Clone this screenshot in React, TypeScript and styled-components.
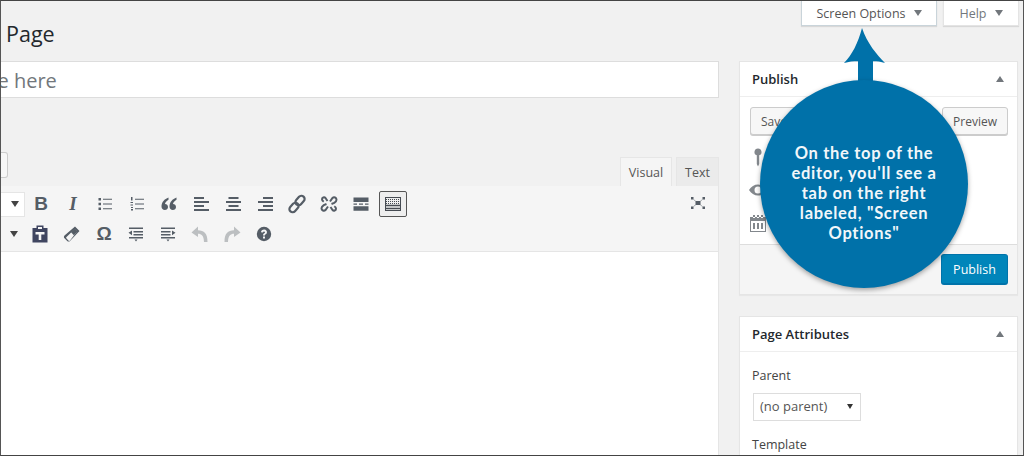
import React from 'react';
import styled, { createGlobalStyle } from 'styled-components';

const GlobalStyle = createGlobalStyle`
    html, body {
        margin: 0;
        padding: 0;
        background: #f1f1f1;
    }
    * {
        box-sizing: border-box;
    }
`;

const Icon: React.FC<{ children: React.ReactNode; color?: string }> = ({ children, color = '#555d66' }) => (
    <svg width="20" height="20" viewBox="0 0 20 20" fill={color}>
        {children}
    </svg>
);

const App: React.FC = () => {
    return (
        <Frame>
            <GlobalStyle />
            <TopBar>
                <ScreenTab active>
                    Screen Options <TabArrow />
                </ScreenTab>
                <ScreenTab>
                    Help <TabArrow />
                </ScreenTab>
            </TopBar>
            <Columns>
                <EditorColumn>
                    <PageTitle>Page</PageTitle>
                    <TitleInput>
                        <TitleHint>Enter title here</TitleHint>
                    </TitleInput>
                    <MediaRow>
                        <MediaStub />
                        <EditorTabs>
                            <EditorTab active>Visual</EditorTab>
                            <EditorTab>Text</EditorTab>
                        </EditorTabs>
                    </MediaRow>
                    <Toolbar>
                        <ToolRow>
                            <FormatStub>
                                <SmallArrow />
                            </FormatStub>
                            <ToolGlyph bold>B</ToolGlyph>
                            <ToolGlyph italic>I</ToolGlyph>
                            <Tool>
                                <Icon>
                                    <path d="M3.500 4h2.500v2.500H3.500zM3.500 8.800h2.500v2.500H3.500zM3.500 13.500h2.500V16H3.500zM8 4.800h9v1H8zM8 9.500h9v1H8zM8 14.200h9v1H8z" />
                                </Icon>
                            </Tool>
                            <Tool>
                                <Icon>
                                    <path d="M4 3h1.500v3.500H4zM3.500 8h2.500v1H3.500zM3.500 10.500h2.500v1H3.500zM4 13h2v1H4zM4 15h2v1.500H4zM8 4.800h9v1H8zM8 9.500h9v1H8zM8 14.200h9v1H8z" />
                                </Icon>
                            </Tool>
                            <Tool>
                                <Icon>
                                    <path d="M9.500 3.500C5.500 5 2.500 8 2.500 12.500c0 2.200 1.500 3.500 3.300 3.500 1.800 0 3.200-1.400 3.200-3.100 0-1.700-1.300-3-3-3 .3-1.500 1.500-3 3.500-4.200z" />
                                    <path d="M17.500 3.500C13.500 5 10.500 8 10.500 12.500c0 2.200 1.500 3.500 3.300 3.500 1.800 0 3.200-1.400 3.200-3.100 0-1.700-1.300-3-3-3 .3-1.500 1.500-3 3.500-4.200z" />
                                </Icon>
                            </Tool>
                            <Tool>
                                <Icon>
                                    <path d="M3 3h10v2H3zM3 7h15v2H3zM3 11h10v2H3zM3 15h15v2H3z" />
                                </Icon>
                            </Tool>
                            <Tool>
                                <Icon>
                                    <path d="M5.500 3h10v2h-10zM3 7h15v2H3zM5.500 11h10v2h-10zM3 15h15v2H3z" />
                                </Icon>
                            </Tool>
                            <Tool>
                                <Icon>
                                    <path d="M8 3h10v2H8zM3 7h15v2H3zM8 11h10v2H8zM3 15h15v2H3z" />
                                </Icon>
                            </Tool>
                            <Tool>
                                <Icon>
                                    <g fill="none" stroke="#555d66" strokeWidth="2.200">
                                        <rect x="9.800" y="1.200" width="6.400" height="10.600" rx="3.200" transform="rotate(42 13 6.500)" />
                                        <rect x="3.800" y="8.200" width="6.400" height="10.600" rx="3.200" transform="rotate(42 7 13.500)" />
                                    </g>
                                </Icon>
                            </Tool>
                            <Tool>
                                <Icon>
                                    <g fill="none" stroke="#555d66" strokeWidth="2">
                                        <path d="M11 7.500l2.500-3.500c1.500-1.500 4-.5 4 1.700 0 1.300-1 2.300-2.300 3.200L12.500 10" />
                                        <path d="M9 12.500L6.500 16c-1.500 1.500-4 .5-4-1.700 0-1.300 1-2.300 2.300-3.200L7.500 10" />
                                        <path d="M8.500 7L6.500 4c-1.200-1.300-3.500-.5-3.500 1.300 0 1 .7 1.800 1.700 2.500M11.500 13l2 3c1.200 1.300 3.500.5 3.500-1.300 0-1-.7-1.800-1.700-2.500" />
                                    </g>
                                </Icon>
                            </Tool>
                            <Tool>
                                <Icon>
                                    <path d="M2.500 3.500h15v4.500h-15zM2.500 9.500h3.500v1.200H2.500zM8 9.500h4v1.200H8zM14 9.500h3.500v1.200H14zM2.500 12.200h15v4.500h-15z" />
                                </Icon>
                            </Tool>
                            <SinkTool>
                                <Icon color="none">
                                    <g stroke="#464b52" fill="none">
                                        <rect x="2.500" y="3.500" width="15" height="13" strokeWidth="1" />
                                        <path d="M3 5.500h14M3 7.500h14M3 9.500h14" strokeWidth="1" strokeDasharray="1 1" />
                                        <path d="M3 11.500h14M3 14.500h14" strokeWidth="1.500" />
                                    </g>
                                </Icon>
                            </SinkTool>
                            <FullScreenTool>
                                <Icon>
                                    <path d="M3 4h2.500v2.500H3zM14.500 4H17v2.500h-2.500zM3 13.500h2.500V16H3zM14.500 13.500H17V16h-2.500zM7.500 8h5v4h-5z" />
                                    <path d="M5.500 6.500L8 8.500M14.500 6.500L12 8.500M5.500 13.500L8 11.500M14.500 13.500L12 11.500" stroke="#8f959a" strokeWidth="0.800" />
                                </Icon>
                            </FullScreenTool>
                        </ToolRow>
                        <ToolRow>
                            <FormatStub plain>
                                <SmallArrow />
                            </FormatStub>
                            <Tool>
                                <Icon color="#3f4560">
                                    <path d="M6.500 1.500h7v2.500h4v14.500h-15V4h4zM8 3v2h4V3zM5.500 8v2.500h3.200V16h2.600v-5.500h3.200V8z" fillRule="evenodd" />
                                </Icon>
                            </Tool>
                            <Tool>
                                <Icon>
                                    <path d="M13 2.500l4.500 4.500-9.500 10c-.8.800-2 .8-2.800 0L2.500 14.300c-.8-.8-.8-2 0-2.800zM12.800 5L5 12.600l-.7.700c-.3.300-.3.700 0 1l2.400 2.400c.3.300.7.300 1 0l.7-.7L15.200 7.300z" fillRule="evenodd" />
                                    <path d="M12.800 4.500l2.800 2.800-3.700 3.900-2.900-2.900z" />
                                </Icon>
                            </Tool>
                            <ToolGlyph omega>Ω</ToolGlyph>
                            <Tool>
                                <Icon>
                                    <path d="M3 3.500h14v1.500H3zM7.500 7h9.500v1.500H7.500zM7.500 10h9.500v1.500H7.500zM3 13h14v1.500H3zM8.500 15.500h3L10 17.500zM2.500 8.800L6 6.500v4.700z" />
                                </Icon>
                            </Tool>
                            <Tool>
                                <Icon>
                                    <path d="M3 3.500h14v1.500H3zM3 7h9.500v1.500H3zM3 10h9.500v1.500H3zM3 13h14v1.500H3zM8.500 15.500h3L10 17.500zM17.500 8.800L14 6.500v4.700z" />
                                </Icon>
                            </Tool>
                            <Tool>
                                <Icon color="#bcbfc1">
                                    <path d="M8 2.500L1.500 8.500 8 13V9.700c3.500 0 5.800 1.800 6 8.300h3.500c.2-8.500-3.500-11.800-9.500-11.800z" />
                                </Icon>
                            </Tool>
                            <Tool>
                                <Icon color="#bcbfc1">
                                    <path d="M12 2.500l6.500 6L12 13V9.700c-3.500 0-5.800 1.800-6 8.300H2.500C2.300 9.500 6 6.200 12 6.200z" />
                                </Icon>
                            </Tool>
                            <Tool>
                                <Icon>
                                    <path d="M10 2.800a7.200 7.200 0 1 0 0 14.400 7.200 7.200 0 0 0 0-14.400zm1 11.700H9v-2h2zm1.800-5.300c-.3.600-1 1-1.500 1.400-.3.300-.3.600-.3 1H9c0-1 .1-1.500.9-2.100.5-.4 1.100-.7 1.100-1.300 0-.5-.4-.8-1-.8s-1 .4-1.100 1.100l-1.900-.2C7.200 6.500 8.400 5.500 10.100 5.500c2.100 0 3.400 1.900 2.700 3.700z" fillRule="evenodd" />
                                </Icon>
                            </Tool>
                        </ToolRow>
                    </Toolbar>
                    <EditorBody />
                </EditorColumn>
                <SideColumn>
                    <MetaBox>
                        <BoxHeader>
                            <BoxTitle>Publish</BoxTitle>
                            <BoxArrow />
                        </BoxHeader>
                        <PublishActions>
                            <PlainButton>Save Draft</PlainButton>
                            <PlainButton>Preview</PlainButton>
                        </PublishActions>
                        <StatusList>
                            <StatusIcon>
                                <svg width="20" height="20" viewBox="0 0 20 20" fill="#82878c">
                                    <path d="M10 1.500a3.500 3.500 0 0 1 1.200 6.800V17L10 19.500 8.800 17V8.300A3.500 3.500 0 0 1 10 1.500z" />
                                </svg>
                            </StatusIcon>
                            <StatusIcon>
                                <svg width="20" height="20" viewBox="0 0 20 20" fill="#82878c">
                                    <path d="M1 10c2-3.500 5.500-5.500 9-5.500s7 2 9 5.500c-2 3.500-5.500 5.500-9 5.500S3 13.500 1 10zm9-3.500a3.500 3.500 0 1 0 0 7 3.500 3.500 0 0 0 0-7z" fillRule="evenodd" />
                                </svg>
                            </StatusIcon>
                            <StatusIcon>
                                <svg width="20" height="20" viewBox="0 0 20 20" fill="#82878c">
                                    <path d="M2 4h16v15H2zM3 8v10h14V8zM5 2h2v3H5zM9 2h2v3H9zM13 2h2v3h-2zM5 10h2v6H5zM9 10h2v6H9zM13 10h2v6h-2z" fillRule="evenodd" />
                                </svg>
                            </StatusIcon>
                        </StatusList>
                        <PublishFooter>
                            <PrimaryButton>Publish</PrimaryButton>
                        </PublishFooter>
                    </MetaBox>
                    <MetaBox>
                        <BoxHeader>
                            <BoxTitle>Page Attributes</BoxTitle>
                            <BoxArrow />
                        </BoxHeader>
                        <AttributesBody>
                            <FieldLabel>Parent</FieldLabel>
                            <SelectBox>
                                (no parent)
                                <SelectArrow />
                            </SelectBox>
                            <FieldLabel>Template</FieldLabel>
                        </AttributesBody>
                    </MetaBox>
                </SideColumn>
            </Columns>
            <Callout>
                <CalloutArrow width="42" height="60" viewBox="0 0 42 60">
                    <path d="M18 0C14 15 8 27 0 35c5-1.500 9-1.800 14-1.800V60h15V33.200c4 0 8 .3 12 1.800C33 27 23 15 18 0z" fill="#0071a9" />
                </CalloutArrow>
                <CalloutCircle>
                    On the top of the
                    <br />
                    editor, you'll see a
                    <br />
                    tab on the right
                    <br />
                    labeled, "Screen
                    <br />
                    Options"
                </CalloutCircle>
            </Callout>
        </Frame>
    );
};

export default App;

const Frame = styled.div`
    position: relative;
    width: 1024px;
    height: 456px;
    overflow: hidden;
    background: #f1f1f1;
    font-family: 'Open Sans', 'Noto Sans', sans-serif;
    color: #444;
    border-top: 1px solid #444;
    border-bottom: 1px solid #444;
    border-left: 1px solid #555;
    border-right: 1px solid #555;
`;

const TopBar = styled.div`
    display: flex;
    justify-content: flex-end;
    gap: 6px;
    height: 26px;
    padding-right: 4px;
`;

const ScreenTab = styled.div<{ active?: boolean }>`
    display: flex;
    align-items: center;
    justify-content: center;
    gap: 8px;
    width: ${(props) => (props.active ? '136px' : '76px')};
    height: 25px;
    background: #fff;
    font-size: 12.5px;
    color: ${(props) => (props.active ? '#555' : '#72777c')};
    border: 1px solid ${(props) => (props.active ? '#c9d4da' : '#e4e4e4')};
    border-top: none;
    box-shadow: 0 1px 1px rgba(0, 0, 0, 0.1);
`;

const TabArrow = styled.span`
    width: 0;
    height: 0;
    border-left: 4px solid transparent;
    border-right: 4px solid transparent;
    border-top: 6px solid #72777c;
`;

const Columns = styled.div`
    display: flex;
    align-items: flex-start;
    gap: 20px;
`;

const EditorColumn = styled.div`
    display: flex;
    flex-direction: column;
    width: 718px;
`;

const PageTitle = styled.h1`
    margin: 0;
    height: 34px;
    padding: 0 0 0 5px;
    font-size: 21.5px;
    font-weight: 400;
    line-height: 13px;
    color: #23282d;
`;

const TitleInput = styled.div`
    height: 37px;
    background: #fff;
    border: 1px solid #ddd;
    border-left: none;
    overflow: hidden;
`;

const TitleHint = styled.div`
    margin-left: -83px;
    font-size: 20px;
    line-height: 37px;
    white-space: nowrap;
    color: #72777c;
`;

const MediaRow = styled.div`
    display: flex;
    justify-content: space-between;
    align-items: flex-end;
    height: 88px;
`;

const MediaStub = styled.div`
    width: 7px;
    height: 26px;
    margin-bottom: 8px;
    background: #f7f7f7;
    border: 1px solid #ccc;
    border-left: none;
    border-radius: 0 3px 3px 0;
`;

const EditorTabs = styled.div`
    display: flex;
    gap: 4px;
`;

const EditorTab = styled.div<{ active?: boolean }>`
    display: flex;
    align-items: center;
    justify-content: center;
    width: ${(props) => (props.active ? '52px' : '43px')};
    height: 29px;
    font-size: 12.5px;
    color: #555;
    background: ${(props) => (props.active ? '#f5f5f5' : '#ebebeb')};
    border: 1px solid #e6e6e6;
    border-bottom: none;
`;

const Toolbar = styled.div`
    display: flex;
    flex-direction: column;
    height: 66px;
    padding-top: 3px;
    background: #f5f5f5;
    border-right: 1px solid #e5e5e5;
    border-bottom: 1px solid #e5e5e5;
`;

const ToolRow = styled.div`
    position: relative;
    display: flex;
    align-items: center;
    height: 30px;
`;

const FormatStub = styled.div<{ plain?: boolean }>`
    display: flex;
    align-items: center;
    justify-content: flex-end;
    width: ${(props) => (props.plain ? '23px' : '24px')};
    height: 25px;
    padding-right: 5px;
    background: ${(props) => (props.plain ? 'transparent' : '#fff')};
    border: 1px solid ${(props) => (props.plain ? 'transparent' : '#e5e5e5')};
    border-left: none;
`;

const SmallArrow = styled.span`
    width: 0;
    height: 0;
    border-left: 4px solid transparent;
    border-right: 4px solid transparent;
    border-top: 6px solid #444;
`;

const Tool = styled.div`
    display: flex;
    align-items: center;
    justify-content: center;
    flex: none;
    width: 32px;
    height: 28px;
`;

const ToolGlyph = styled(Tool)<{ bold?: boolean; italic?: boolean; omega?: boolean }>`
    font-size: ${(props) => (props.omega ? '19px' : '19px')};
    font-weight: 700;
    font-style: ${(props) => (props.italic ? 'italic' : 'normal')};
    font-family: ${(props) => (props.italic ? "'Liberation Serif'" : "'Liberation Sans'")}, sans-serif;
    color: #555d66;
`;

const SinkTool = styled(Tool)`
    margin-left: 2px;
    width: 28px;
    height: 26px;
    background: #eee;
    border: 1px solid #555;
    border-radius: 2px;
`;

const FullScreenTool = styled(Tool)`
    position: absolute;
    right: 4px;
    top: 0;
`;

const EditorBody = styled.div`
    height: 210px;
    background: #fff;
    border-right: 1px solid #e5e5e5;
`;

const SideColumn = styled.div`
    display: flex;
    flex-direction: column;
    gap: 21px;
    width: 279px;
    margin-top: 34px;
`;

const MetaBox = styled.section`
    background: #fff;
    border: 1px solid #e5e5e5;
    box-shadow: 0 1px 1px rgba(0, 0, 0, 0.04);
`;

const BoxHeader = styled.div`
    display: flex;
    align-items: center;
    justify-content: space-between;
    height: 35px;
    padding: 0 13px 0 12px;
    border-bottom: 1px solid #eee;
`;

const BoxTitle = styled.h2`
    margin: 0;
    font-size: 13px;
    font-weight: 600;
    color: #23282d;
`;

const BoxArrow = styled.span`
    width: 0;
    height: 0;
    border-left: 4px solid transparent;
    border-right: 4px solid transparent;
    border-bottom: 6px solid #72777c;
`;

const PublishActions = styled.div`
    display: flex;
    justify-content: space-between;
    padding: 10px 9px 0 10px;
`;

const PlainButton = styled.div`
    display: flex;
    align-items: center;
    justify-content: center;
    height: 28px;
    padding: 0 10px;
    font-size: 12px;
    color: #555;
    background: #f7f7f7;
    border: 1px solid #ccc;
    border-radius: 3px;
    box-shadow: 0 1px 0 #ccc;
`;

const StatusList = styled.div`
    display: flex;
    flex-direction: column;
    gap: 13px;
    height: 109px;
    padding: 12px 0 0 8px;
`;

const StatusIcon = styled.div`
    height: 20px;
`;

const PublishFooter = styled.div`
    display: flex;
    justify-content: flex-end;
    height: 50px;
    padding: 9px 9px 0;
    background: #f5f5f5;
    border-top: 1px solid #ddd;
`;

const PrimaryButton = styled.div`
    display: flex;
    align-items: center;
    justify-content: center;
    width: 67px;
    height: 31px;
    font-size: 12.5px;
    color: #fff;
    background: #0085ba;
    border: 1px solid #0073aa;
    border-bottom-width: 2px;
    border-radius: 3px;
`;

const AttributesBody = styled.div`
    display: flex;
    flex-direction: column;
    align-items: flex-start;
    padding: 14px 12px 0;
`;

const FieldLabel = styled.div`
    font-size: 12.5px;
    line-height: 20px;
    color: #444;
`;

const SelectBox = styled.div`
    display: flex;
    align-items: center;
    justify-content: space-between;
    width: 108px;
    height: 28px;
    margin: 7px 0 14px 1px;
    padding: 0 7px 2px 6px;
    font-size: 13px;
    color: #555;
    background: #fff;
    border: 1px solid #ddd;
`;

const SelectArrow = styled.span`
    width: 0;
    height: 0;
    border-left: 3px solid transparent;
    border-right: 3px solid transparent;
    border-top: 5px solid #333;
`;

const Callout = styled.div`
    position: absolute;
    left: 759px;
    top: 27px;
    display: flex;
    flex-direction: column;
    align-items: center;
    width: 208px;
`;

const CalloutArrow = styled.svg`
    margin-bottom: -8px;
    margin-left: 1px;
`;

const CalloutCircle = styled.div`
    display: flex;
    display: block;
    width: 208px;
    height: 208px;
    padding-top: 63px;
    border-radius: 50%;
    background: #0071a9;
    box-shadow: 0 2px 5px rgba(0, 0, 0, 0.35);
    font-family: 'Lato', sans-serif;
    font-size: 16.5px;
    font-weight: 700;
    line-height: 20px;
    letter-spacing: 0.7px;
    text-align: center;
    color: #f2f7fa;
`;
